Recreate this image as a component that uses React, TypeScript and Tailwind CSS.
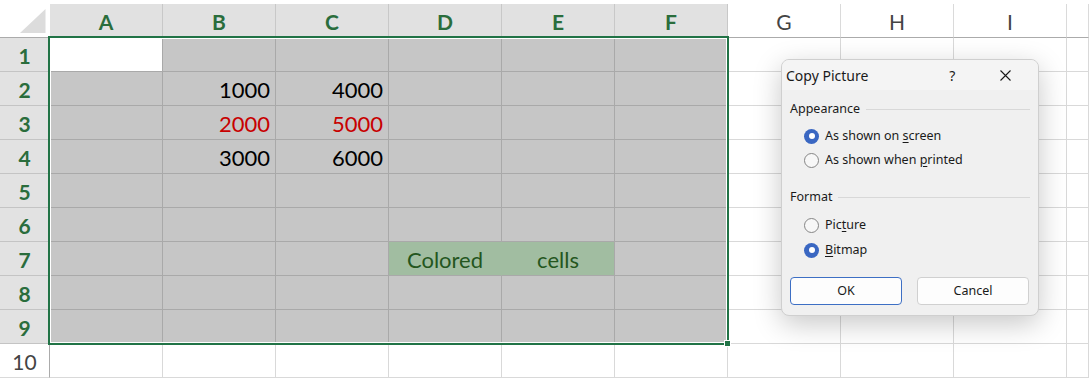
import React from "react";

const COLS = ["A", "B", "C", "D", "E", "F", "G", "H", "I", ""];
const SELECTED_COLS = ["A", "B", "C", "D", "E", "F"];

type Cell = { v: string; kind: "num" | "red" | "good" };

const DATA: Record<string, Cell> = {
  B2: { v: "1000", kind: "num" },
  C2: { v: "4000", kind: "num" },
  B3: { v: "2000", kind: "red" },
  C3: { v: "5000", kind: "red" },
  B4: { v: "3000", kind: "num" },
  C4: { v: "6000", kind: "num" },
  D7: { v: "Colored", kind: "good" },
  E7: { v: "cells", kind: "good" },
};

function Corner() {
  return (
    <div className="relative box-border border-b border-[#ababab] bg-white">
      <svg className="absolute left-0 top-0" width="50" height="34" viewBox="0 0 50 34">
        <polygon points="45.5,5 45.5,29 20,29" fill="#dcdcdc" />
      </svg>
    </div>
  );
}

function ColHeader({ col }: { col: string }) {
  const sel = SELECTED_COLS.includes(col);
  return (
    <div
      className={
        sel
          ? "box-border flex items-end justify-center border-r border-b border-r-[#c8c8c8] border-b-[#ababab] bg-[#e1e1e1] pb-[5px] text-[21px] font-bold leading-none text-[#2a6d3c]"
          : "box-border flex items-end justify-center border-r border-b border-r-[#dadada] border-b-[#ababab] bg-white pb-[5px] text-[21px] leading-none text-[#444]"
      }
    >
      {col}
    </div>
  );
}

function RowHeader({ row }: { row: number }) {
  const sel = row <= 9;
  return (
    <div
      className={
        sel
          ? "box-border flex items-end justify-center border-r border-b border-r-[#ababab] border-b-[#c4c4c4] bg-[#e2e2e2] pb-[5px] text-[21px] font-bold leading-none text-[#2a6d3c]"
          : "box-border flex items-end justify-center border-r border-b border-r-[#ababab] border-b-[#dadada] bg-white pb-[5px] text-[21px] leading-none text-[#444]"
      }
    >
      {row}
    </div>
  );
}

function GridCell({ col, row }: { col: string; row: number }) {
  const id = col + row;
  const cell = DATA[id];
  const sel = SELECTED_COLS.includes(col) && row <= 9;
  const active = id === "A1";

  let cls = "box-border flex items-end border-r border-b pb-[4px] text-[22px] leading-none ";
  if (cell?.kind === "good") {
    cls += "justify-center bg-[#a1bda1] text-[#24561e] border-b-[#a9a9a9] ";
    cls += col === "D" ? "border-r-[#a1bda1]" : "border-r-[#a9a9a9]";
  } else if (active) {
    cls += "bg-white border-[#a9a9a9]";
  } else if (sel) {
    cls += "justify-end pr-[5px] bg-[#c6c6c6] border-[#a9a9a9] ";
    cls += cell?.kind === "red" ? "text-[#c80000]" : "text-black";
  } else {
    cls += "bg-white border-[#d9d9d9]";
  }

  return <div className={cls}>{cell?.v}</div>;
}

function Radio({ checked, children }: { checked?: boolean; children: React.ReactNode }) {
  return (
    <div className="flex h-[24px] items-center pl-[22px]">
      {checked ? (
        <span className="flex h-[15px] w-[15px] items-center justify-center rounded-full bg-[#3a67c2]">
          <span className="h-[6px] w-[6px] rounded-full bg-white" />
        </span>
      ) : (
        <span className="box-border h-[15px] w-[15px] rounded-full border border-[#858585] bg-[#f7f7f7]" />
      )}
      <span className="ml-[6px] text-[12.5px] text-[#1a1a1a]">{children}</span>
    </div>
  );
}

function Section({ title }: { title: string }) {
  return (
    <div className="flex h-[18px] items-center pl-[8px] pr-[8px]">
      <span className="text-[12.5px] text-[#1a1a1a]">{title}</span>
      <span className="ml-[6px] h-px flex-1 bg-[#d8d8d8]" />
    </div>
  );
}

function CopyPictureDialog() {
  return (
    <div
      className="absolute left-[781px] top-[59px] box-border flex h-[257px] w-[258px] flex-col overflow-hidden rounded-[8px] border border-[#cfcfcf] bg-[#f0f0f0] shadow-[0_8px_28px_rgba(0,0,0,0.22)]"
      style={{ fontFamily: '"Noto Sans", "Open Sans", sans-serif' }}
    >
      <div className="flex h-[30px] items-center bg-[#f4f4f4] pl-[4px]">
        <span className="text-[14px] text-[#1a1a1a]">Copy Picture</span>
        <span className="ml-[81px] text-[14px] text-[#1a1a1a]">?</span>
        <svg className="ml-[45px]" width="11" height="11" viewBox="0 0 11 11">
          <path d="M0.5 0.5 L10.5 10.5 M10.5 0.5 L0.5 10.5" stroke="#1a1a1a" strokeWidth="1.1" />
        </svg>
      </div>

      <div className="mt-[10px]">
        <Section title="Appearance" />
      </div>
      <div className="mt-[6px]">
        <Radio checked>
          As shown on <span className="underline underline-offset-2">s</span>creen
        </Radio>
        <Radio>
          As shown when <span className="underline underline-offset-2">p</span>rinted
        </Radio>
      </div>

      <div className="mt-[16px]">
        <Section title="Format" />
      </div>
      <div className="mt-[7px]">
        <Radio>
          Pic<span className="underline underline-offset-2">t</span>ure
        </Radio>
        <div className="mt-[1px]">
          <Radio checked>
            <span className="underline underline-offset-2">B</span>itmap
          </Radio>
        </div>
      </div>

      <div className="mt-[15px] flex gap-[15px] pl-[8px]">
        <button className="box-border h-[28px] w-[112px] rounded-[4px] border border-[#3d6fc4] bg-[#fdfdfd] text-[12.5px] text-[#1a1a1a]">
          OK
        </button>
        <button className="box-border h-[28px] w-[112px] rounded-[4px] border border-[#d0d0d0] bg-[#fdfdfd] text-[12.5px] text-[#1a1a1a]">
          Cancel
        </button>
      </div>
    </div>
  );
}

export default function App() {
  const rows = Array.from({ length: 10 }, (_, i) => i + 1);

  return (
    <div
      className="relative h-[380px] w-[1089px] overflow-hidden bg-white pt-[4px]"
      style={{ fontFamily: 'Lato, "Open Sans", sans-serif' }}
    >
      <div className="grid grid-cols-[50px_repeat(9,113px)_22px] grid-rows-[34px_repeat(10,34px)]">
        <Corner />
        {COLS.map((c, i) => (
          <ColHeader key={i} col={c} />
        ))}
        {rows.map((r) => (
          <React.Fragment key={r}>
            <RowHeader row={r} />
            {COLS.map((c, i) => (
              <GridCell key={i} col={c} row={r} />
            ))}
          </React.Fragment>
        ))}
      </div>

      {/* selection outline A1:F9 */}
      <div className="pointer-events-none absolute left-[48px] top-[36px] h-[309px] w-[681px] border-2 border-[#217346] shadow-[inset_0_0_0_1px_white]" />
      <div className="pointer-events-none absolute left-[724px] top-[340px] h-[7px] w-[7px] border border-white bg-[#217346]" />

      <CopyPictureDialog />
    </div>
  );
}
